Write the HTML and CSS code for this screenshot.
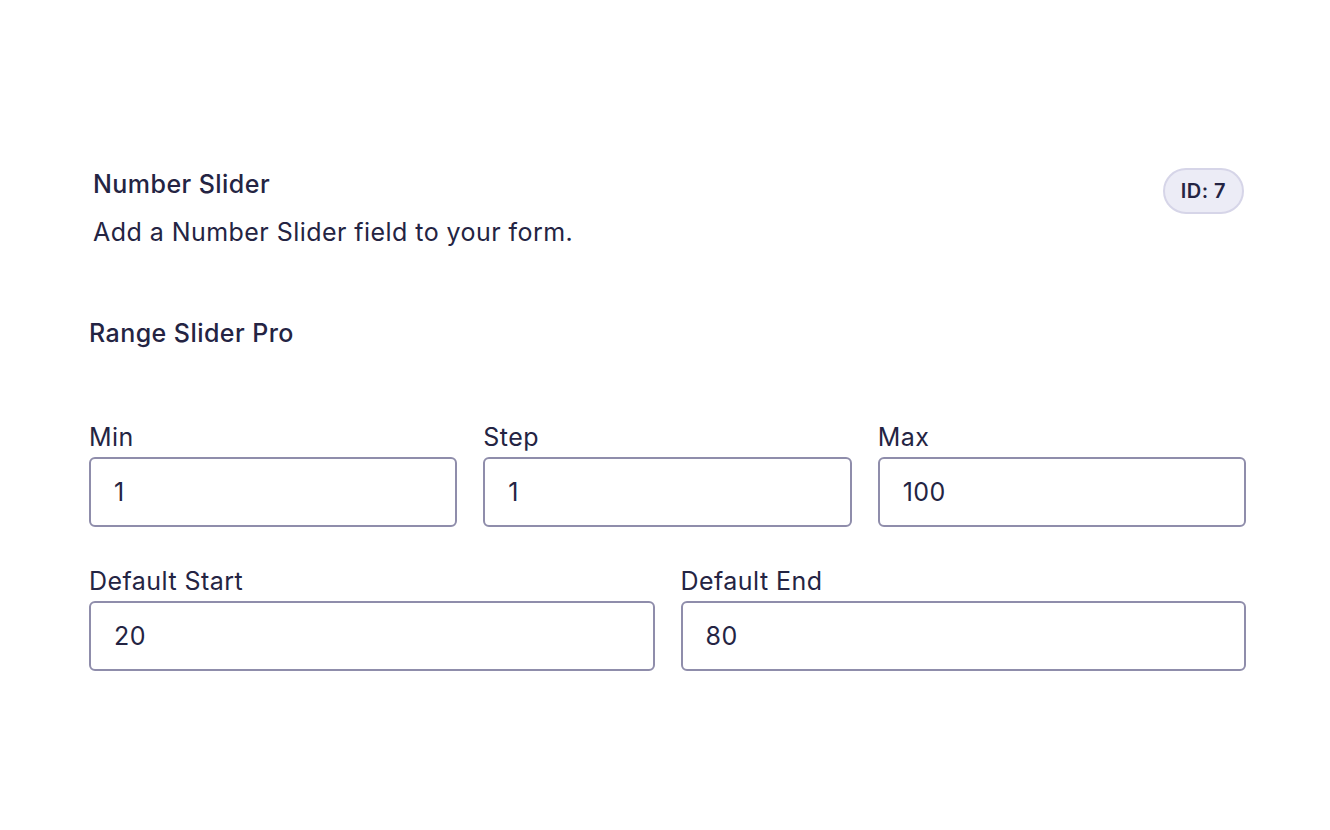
FILE: index.html
```html
<!DOCTYPE html>
<html>
<head>
<meta charset="utf-8">
<link rel="stylesheet" href="styles.css">
</head>
<body>
<div class="page">
  <div class="header">
    <div class="header-text">
      <div class="title">Number Slider</div>
      <div class="desc">Add a Number Slider field to your form.</div>
    </div>
    <div class="badge">ID: 7</div>
  </div>
  <div class="section-title">Range Slider Pro</div>
  <div class="row row-3">
    <div class="field">
      <label class="label">Min</label>
      <input class="input" type="text" value="1">
    </div>
    <div class="field">
      <label class="label">Step</label>
      <input class="input" type="text" value="1">
    </div>
    <div class="field">
      <label class="label">Max</label>
      <input class="input" type="text" value="100">
    </div>
  </div>
  <div class="row row-2">
    <div class="field">
      <label class="label">Default Start</label>
      <input class="input" type="text" value="20">
    </div>
    <div class="field">
      <label class="label">Default End</label>
      <input class="input" type="text" value="80">
    </div>
  </div>
</div>
</body>
</html>
```

FILE: styles.css
```css
* { box-sizing: border-box; }
html, body { margin: 0; padding: 0; background: #ffffff; }
body {
  font-family: Inter, "Noto Sans", sans-serif;
  color: #242443;
  letter-spacing: 0.45px;
}
.page {
  padding: 168px 84px 0 89px;
}
.header {
  display: flex;
  justify-content: space-between;
  align-items: flex-start;
  padding-left: 4px;
}
.title {
  font-size: 25px;
  line-height: 32px;
  font-weight: 500;
}
.desc {
  font-size: 25px;
  line-height: 32px;
  margin-top: 16px;
}
.badge {
  margin-right: 2px;
  height: 46px;
  padding: 0 16px;
  border-radius: 23px;
  background: #ececf6;
  border: 2px solid #d6d5e8;
  font-size: 20px;
  font-weight: 600;
  display: flex;
  align-items: center;
  color: #242443;
}
.section-title {
  margin-top: 69px;
  font-size: 25px;
  line-height: 32px;
  font-weight: 500;
}
.row {
  display: grid;
  gap: 26px;
}
.row-3 { grid-template-columns: repeat(3, 1fr); margin-top: 72px; }
.row-2 { grid-template-columns: repeat(2, 1fr); margin-top: 38px; }
.field {
  display: flex;
  flex-direction: column;
}
.label {
  font-size: 25px;
  line-height: 32px;
  margin-bottom: 4px;
}
.input {
  height: 70px;
  width: 100%;
  border: 2px solid #8f8dab;
  border-radius: 6px;
  padding: 0 23px;
  font-family: Inter, "Noto Sans", sans-serif;
  font-size: 25px;
  letter-spacing: 0.45px;
  color: #242443;
  background: #ffffff;
  outline: none;
}
```
